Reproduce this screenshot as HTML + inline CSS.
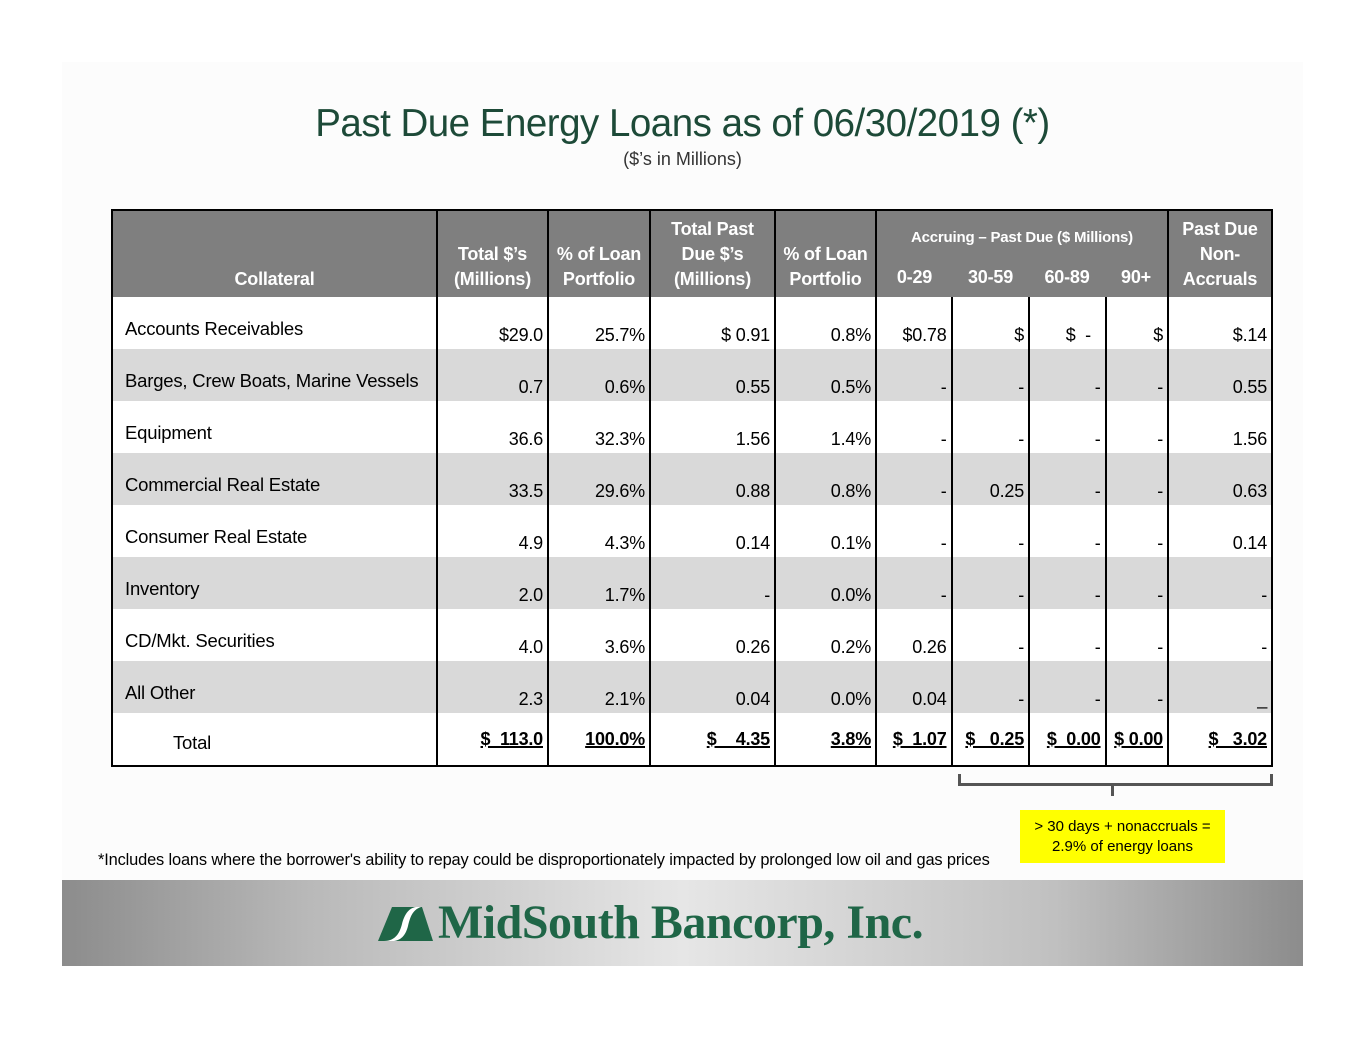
<!DOCTYPE html>
<html><head><meta charset="utf-8"><style>
*{margin:0;padding:0;box-sizing:border-box}
body{width:1365px;height:1055px;background:#fff;position:relative;font-family:"Liberation Sans",sans-serif;overflow:hidden}
.slide{position:absolute;left:62px;top:62px;width:1241px;height:904px;background:#fcfcfc}
.title{position:absolute;left:0;width:1365px;top:102px;text-align:center;color:#1d4a38;font-size:38.5px;letter-spacing:-0.5px}
.sub{position:absolute;left:0;width:1365px;top:149px;text-align:center;color:#333;font-size:18px}
table{position:absolute;left:111px;top:209px;border-collapse:collapse;table-layout:fixed;border:2px solid #000}
td{font-size:18px;color:#000;border-left:2px solid #000;height:52px;text-align:right;vertical-align:bottom;padding:0 4px 3px 0;white-space:nowrap;letter-spacing:-0.2px}
td.l{text-align:left;vertical-align:top;padding:21px 0 0 12px;border-left:none;font-size:18.5px}
tr.g td{background:#d9d9d9}
tr.w td{background:#fff}
tr.h td{background:#7f7f7f;color:#fff;font-weight:bold;height:87px;text-align:center;line-height:25px;padding:0 0 5px 0;border-left:2px solid #000}
tr.t td{height:53px;font-weight:bold;vertical-align:middle;padding-bottom:0}
tr.t td u{text-decoration:underline;text-decoration-thickness:2px}
.brk{position:absolute;border-color:#555;border-style:solid}
.note{position:absolute;left:98px;top:851px;font-size:16.4px;color:#000;letter-spacing:-0.15px}
.yb{position:absolute;left:1020px;top:810px;width:205px;height:53px;background:#ffff00;text-align:center;font-size:15px;line-height:20px;padding-top:7px}
.foot{position:absolute;left:62px;top:880px;width:1241px;height:86px;background:linear-gradient(90deg,#8c8c8c 0%,#b9b9b9 20%,#e6e6e6 50%,#c0c0c0 80%,#8c8c8c 100%)}
.logo{position:absolute;left:438px;top:895px;font-family:"Liberation Serif",serif;font-weight:bold;font-size:48px;color:#1f6647;letter-spacing:-0.5px}
</style></head><body>
<div class="slide"></div>
<div class="title">Past Due Energy Loans as of 06/30/2019 (*)</div>
<div class="sub">($’s in Millions)</div>
<table>
<colgroup><col style="width:325px"><col style="width:111px"><col style="width:102px"><col style="width:125px"><col style="width:101px"><col style="width:75px"><col style="width:77px"><col style="width:76px"><col style="width:62px"><col style="width:104px"></colgroup>
<tr class="h"><td style="border-left:none">Collateral</td><td>Total $’s<br>(Millions)</td><td>% of Loan<br>Portfolio</td><td>Total Past<br>Due $’s<br>(Millions)</td><td>% of Loan<br>Portfolio</td>
<td colspan="4" style="padding:0;vertical-align:top"><div style="font-size:15px;margin-top:14px;height:36px">Accruing – Past Due ($ Millions)</div><div style="display:flex;padding-top:4px"><span style="width:75px">0-29</span><span style="width:77px">30-59</span><span style="width:76px">60-89</span><span style="width:62px">90+</span></div></td>
<td>Past Due<br>Non-<br>Accruals</td></tr>
<tr class="w"><td class="l">Accounts Receivables</td><td>$29.0</td><td>25.7%</td><td>$ 0.91</td><td>0.8%</td><td>$0.78</td><td>$</td><td>$&nbsp;&nbsp;-&nbsp;&nbsp;</td><td>$</td><td>$.14</td></tr>
<tr class="g"><td class="l">Barges, Crew Boats, Marine Vessels</td><td>0.7</td><td>0.6%</td><td>0.55</td><td>0.5%</td><td>-</td><td>-</td><td>-</td><td>-</td><td>0.55</td></tr>
<tr class="w"><td class="l">Equipment</td><td>36.6</td><td>32.3%</td><td>1.56</td><td>1.4%</td><td>-</td><td>-</td><td>-</td><td>-</td><td>1.56</td></tr>
<tr class="g"><td class="l">Commercial Real Estate</td><td>33.5</td><td>29.6%</td><td>0.88</td><td>0.8%</td><td>-</td><td>0.25</td><td>-</td><td>-</td><td>0.63</td></tr>
<tr class="w"><td class="l">Consumer Real Estate</td><td>4.9</td><td>4.3%</td><td>0.14</td><td>0.1%</td><td>-</td><td>-</td><td>-</td><td>-</td><td>0.14</td></tr>
<tr class="g"><td class="l">Inventory</td><td>2.0</td><td>1.7%</td><td>-</td><td>0.0%</td><td>-</td><td>-</td><td>-</td><td>-</td><td>-</td></tr>
<tr class="w"><td class="l">CD/Mkt. Securities</td><td>4.0</td><td>3.6%</td><td>0.26</td><td>0.2%</td><td>0.26</td><td>-</td><td>-</td><td>-</td><td>-</td></tr>
<tr class="g"><td class="l">All Other</td><td>2.3</td><td>2.1%</td><td>0.04</td><td>0.0%</td><td>0.04</td><td>-</td><td>-</td><td>-</td><td>_</td></tr>
<tr class="t w"><td class="l" style="font-weight:normal;padding:8px 0 0 60px;vertical-align:middle">Total</td><td><u>$&nbsp;&nbsp;113.0</u></td><td><u>100.0%</u></td><td><u>$&nbsp;&nbsp;&nbsp;&nbsp;4.35</u></td><td><u>3.8%</u></td><td><u>$&nbsp;&nbsp;1.07</u></td><td><u>$&nbsp;_0.25</u></td><td><u>$&nbsp;&nbsp;0.00</u></td><td><u>$ 0.00</u></td><td><u>$&nbsp;&nbsp;&nbsp;3.02</u></td></tr>
</table>
<div class="brk" style="left:958px;top:774px;width:315px;height:12px;border-width:0 3px 3px 3px"></div>
<div class="brk" style="left:1111px;top:784px;width:0;height:12px;border-width:0 0 0 3px"></div>
<div class="yb">&gt; 30 days + nonaccruals =<br>2.9% of energy loans</div>
<div class="note">*Includes loans where the borrower's ability to repay could be disproportionately impacted by prolonged low oil and gas prices</div>
<div class="foot"></div>
<svg style="position:absolute;left:376px;top:904px" width="60" height="40" viewBox="0 0 60 40">
<polygon points="2,37 16,3 46,3 57,37" fill="#1f6647"/>
<path d="M8,37 C20,37 24,28 26,20 C28,12 32,4 40,3 L45,3 C36,6 34,14 32,22 C30,30 26,36 18,37 Z" fill="#fff"/>
</svg>
<div class="logo">MidSouth Bancorp, Inc.</div>
</body></html>
